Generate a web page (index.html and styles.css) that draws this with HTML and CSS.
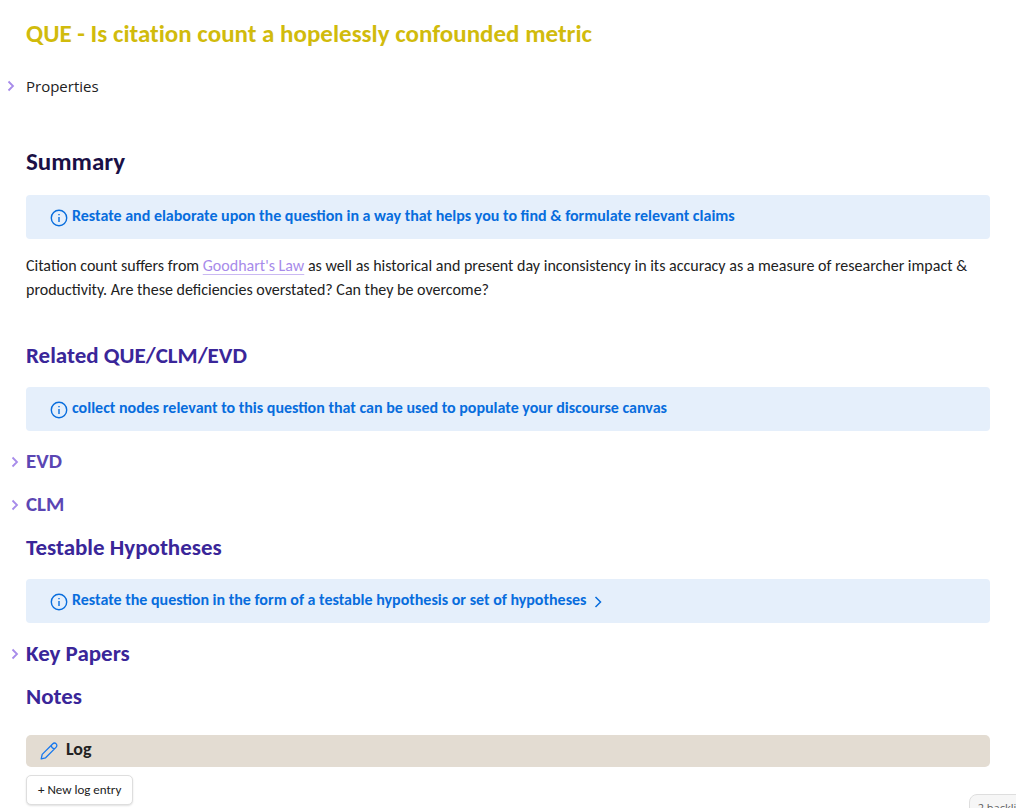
FILE: index.html
```html
<!DOCTYPE html>
<html lang="en">
<head>
<meta charset="utf-8">
<meta name="viewport" content="width=device-width, initial-scale=1">
<title>QUE - Is citation count a hopelessly confounded metric</title>
<link rel="stylesheet" href="styles.css">
</head>
<body>
<main class="note">
  <h1 class="title">QUE - Is citation count a hopelessly confounded metric</h1>
  <div class="properties">
    <button class="fold fold-wide" type="button" aria-label="Expand properties"><svg class="chevron" viewBox="0 0 8 12"><path d="M1.5 1.5 6 6 1.5 10.5"/></svg></button>
    <span>Properties</span>
  </div>

  <h1 class="heading summary">Summary</h1>
  <div class="callout">
    <svg class="info" viewBox="0 0 18 18"><circle cx="9" cy="9" r="7.7"/><path d="M9 8v5M9 5v1.3"/></svg>
    <strong>Restate and elaborate upon the question in a way that helps you to find &amp; formulate relevant claims</strong>
  </div>
  <p class="text">Citation count suffers from <a class="link" href="#goodhart">Goodhart's Law</a> as well as historical and present day inconsistency in its accuracy as a measure of researcher impact &amp; productivity. Are these deficiencies overstated? Can they be overcome?</p>

  <h2 class="heading related">Related QUE/CLM/EVD</h2>
  <div class="callout">
    <svg class="info" viewBox="0 0 18 18"><circle cx="9" cy="9" r="7.7"/><path d="M9 8v5M9 5v1.3"/></svg>
    <strong>collect nodes relevant to this question that can be used to populate your discourse canvas</strong>
  </div>
  <div class="foldable">
    <button class="fold" type="button" aria-label="Expand EVD"><svg class="chevron" viewBox="0 0 8 12"><path d="M1.5 1.5 6 6 1.5 10.5"/></svg></button>
    <h3 class="heading minor">EVD</h3>
  </div>
  <div class="foldable">
    <button class="fold" type="button" aria-label="Expand CLM"><svg class="chevron" viewBox="0 0 8 12"><path d="M1.5 1.5 6 6 1.5 10.5"/></svg></button>
    <h3 class="heading minor">CLM</h3>
  </div>

  <h2 class="heading">Testable Hypotheses</h2>
  <div class="callout">
    <svg class="info" viewBox="0 0 18 18"><circle cx="9" cy="9" r="7.7"/><path d="M9 8v5M9 5v1.3"/></svg>
    <strong>Restate the question in the form of a testable hypothesis or set of hypotheses</strong>
    <button class="expand" type="button" aria-label="Expand callout"><svg class="chevron" viewBox="0 0 8 12"><path d="M1.5 1 6.5 6 1.5 11"/></svg></button>
  </div>
  <div class="foldable">
    <button class="fold" type="button" aria-label="Expand Key Papers"><svg class="chevron" viewBox="0 0 8 12"><path d="M1.5 1.5 6 6 1.5 10.5"/></svg></button>
    <h2 class="heading">Key Papers</h2>
  </div>
  <h2 class="heading">Notes</h2>

  <div class="log">
    <svg class="pencil" viewBox="0 0 18 18"><path d="M1.2 16.8 2.2 12.4 12.6 2C13.8.8 15.3 1 16.2 1.9 17.1 2.8 17.1 4.3 16 5.4L5.6 15.8ZM11.4 3.2C11.2 5.3 12.7 6.8 14.8 6.6"/></svg>
    <strong>Log</strong>
  </div>
  <button class="entry" type="button">+ New log entry</button>
</main>
<aside class="status">2 backlinks</aside>
</body>
</html>
```
FILE: styles.css
```css
* { box-sizing: border-box; }
html, body { height: 100%; }
body {
  margin: 0;
  overflow: hidden;
  background: #fff;
  color: #222;
  font: 16px/24px Carlito, Calibri, Lato, sans-serif;
}
button { margin: 0; border: 0; padding: 0; background: none; font: inherit; color: inherit; }
.note { padding: 14px 26px 0; }
.title {
  margin: 0;
  font-size: 25px;
  line-height: 40px;
  font-weight: 700;
  font-variant-ligatures: none;
  color: #d1bb0c;
}
.properties {
  display: flex;
  align-items: center;
  margin: 19px 0 41px;
  font: 15px/26px "Open Sans", "Noto Sans", sans-serif;
}
.fold { display: flex; width: 15px; margin-left: -15px; color: #a78bea; }
.fold-wide { width: 19px; margin-left: -19px; }
.chevron { display: block; width: 8px; height: 12px; fill: none; stroke: currentColor; stroke-width: 1.8; }
.heading { margin: 0; font-size: 23px; line-height: 43px; font-weight: 700; color: #3a2699; }
.summary { margin-bottom: 12px; font-size: 25px; color: #1a1046; }
.related { margin-top: 32px; }
.minor { font-size: 21px; color: #5b46b3; }
.foldable { display: flex; align-items: center; }
.callout {
  display: flex;
  align-items: center;
  margin: 10px 0 9px;
  padding: 9px 24px 11px;
  border-radius: 4px;
  background: #e5effb;
  color: #086ddd;
}
.info { width: 18px; height: 18px; margin: 3px 4px 0 0; fill: none; stroke: currentColor; stroke-width: 1.4; }
.expand { margin: 4px 0 0 8px; }
.expand .chevron { stroke-width: 1.5; }
.text { margin: 15px 0 0; }
.link {
  color: #a78bea;
  text-decoration: underline 1px #a78bea99;
  text-underline-offset: 3px;
  text-decoration-skip-ink: none;
}
.log {
  display: flex;
  align-items: center;
  gap: 8px;
  margin: 17px 0 8px;
  padding: 2px 14px 6px;
  border-radius: 5px;
  background: #e3dcd2;
  font-size: 18px;
}
.pencil { width: 18px; height: 18px; margin-top: 4px; fill: none; stroke: #1677ee; stroke-width: 1.3; stroke-linejoin: round; }
.entry {
  padding: 0 11px;
  border: 1px solid #dedede;
  border-radius: 5px;
  background: #fff;
  box-shadow: 0 1px 2px #0000001f;
  font-size: 13px;
  line-height: 28px;
}
.status {
  position: fixed;
  right: -27px;
  bottom: -14px;
  padding: 3px 8px;
  border: 1px solid #dedede;
  border-radius: 8px 0 0;
  background: #f6f6f6;
  color: #5c5c5c;
  font: 11px/20px "Open Sans", sans-serif;
  white-space: nowrap;
}
```
